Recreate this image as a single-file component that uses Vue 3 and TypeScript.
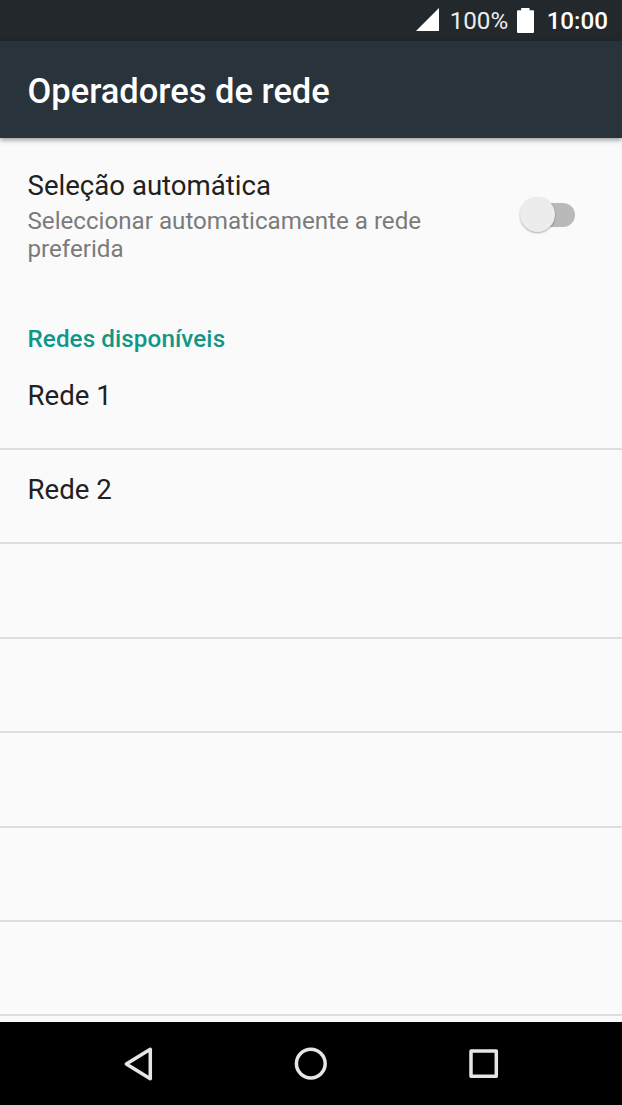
<script setup lang="ts">
import { ref } from 'vue'

const automatic = ref<boolean>(false)
const rows: string[] = ['Rede 1', 'Rede 2', '', '', '', '', '']
</script>

<template>
  <div class="screen">
    <header class="status">
      <svg class="signal" width="23" height="23" viewBox="0 0 23 23"><path d="M0 23 23 0v23z" fill="#fff" /></svg>
      <span class="percent">100%</span>
      <svg class="battery" width="17" height="25" viewBox="0 0 17 25"><path d="M4.2 0h8.3v2.2H16a1 1 0 0 1 1 1V24a1 1 0 0 1-1 1H1a1 1 0 0 1-1-1V3.200a1 1 0 0 1 1-1h3.200z" fill="#fff" /></svg>
      <span class="clock">10:00</span>
    </header>
    <div class="toolbar"><h1>Operadores de rede</h1></div>
    <main class="content">
      <section class="preference">
        <div class="copy">
          <div class="label">Seleção automática</div>
          <div class="summary">Seleccionar automaticamente a rede preferida</div>
        </div>
        <div class="switch" role="switch" :aria-checked="automatic" @click="automatic = !automatic">
          <span class="thumb" :class="{ on: automatic }"></span>
        </div>
      </section>
      <h2>Redes disponíveis</h2>
      <ul>
        <li v-for="(row, index) in rows" :key="index">{{ row }}</li>
      </ul>
    </main>
    <nav class="navbar">
      <svg width="622" height="83" viewBox="0 0 622 83" fill="none" stroke="#e6e6e6" stroke-width="3.5" stroke-linejoin="round">
        <path d="M150.300 27.300v29.400L126.300 42z" />
        <circle cx="310.800" cy="41.600" r="14.400" />
        <rect x="471" y="29" width="25.300" height="25.300" />
      </svg>
    </nav>
  </div>
</template>

<style>
html,
body {
  margin: 0;
  overflow: hidden;
}
</style>

<style scoped>
.screen {
  width: 622px;
  height: 1105px;
  display: flex;
  flex-direction: column;
  background: #fafafa;
  color: #212121;
  font-family: Roboto, sans-serif;
  overflow: hidden;
}
.status {
  flex: none;
  box-sizing: border-box;
  height: 41px;
  padding: 2px 14px 0 0;
  display: flex;
  align-items: center;
  justify-content: flex-end;
  background: #23282c;
  color: #fff;
  font-size: 24.2px;
  line-height: 39px;
}
.signal {
  margin: 0 10.5px 3.4px 0;
}
.percent {
  margin-right: 9px;
  color: #eceeee;
}
.battery {
  margin: 0 12.5px 1.5px 0;
}
.clock {
  font-weight: 500;
}
.toolbar {
  flex: none;
  box-sizing: border-box;
  height: 97px;
  padding: 3px 27.5px 0;
  display: flex;
  align-items: center;
  background: #28333b;
  box-shadow: 0 2px 5px rgba(0, 0, 0, 0.4);
  z-index: 1;
}
h1 {
  margin: 0;
  color: #fff;
  font-size: 34.5px;
  font-weight: 500;
  line-height: 40px;
}
.content {
  flex: 1;
  min-height: 0;
  overflow: hidden;
}
.preference {
  height: 155px;
  display: flex;
  justify-content: space-between;
  padding: 31.5px 47px 0 27.5px;
  box-sizing: border-box;
}
.copy {
  width: 430px;
}
.label {
  font-size: 27.6px;
  line-height: 32px;
}
.summary {
  margin-top: 5px;
  color: #7b7b7b;
  font-size: 24.17px;
  line-height: 28.4px;
}
.switch {
  width: 43.5px;
  height: 24px;
  margin-top: 33px;
  display: flex;
  align-items: center;
  border-radius: 12px;
  background: #b9b9b9;
}
.thumb {
  flex: none;
  width: 35px;
  height: 35px;
  margin-left: -12px;
  border-radius: 50%;
  background: #ececec;
  box-shadow: 0 1px 2px rgba(0, 0, 0, 0.32);
}
.thumb.on {
  margin-left: 20px;
  background: #009688;
}
h2 {
  margin: 31.5px 27.5px 0;
  color: #109686;
  font-size: 24.2px;
  font-weight: 500;
  line-height: 28.4px;
  letter-spacing: 0.1px;
}
ul {
  list-style: none;
  margin: 2.7px 0 0;
  padding: 0;
}
li {
  box-sizing: border-box;
  height: 94.4px;
  padding: 24.5px 27.5px 0;
  border-bottom: 2px solid #dedede;
  font-size: 27.6px;
  line-height: 32px;
}
.navbar {
  flex: none;
  height: 83px;
  background: #000;
}
.navbar svg {
  display: block;
}
</style>
